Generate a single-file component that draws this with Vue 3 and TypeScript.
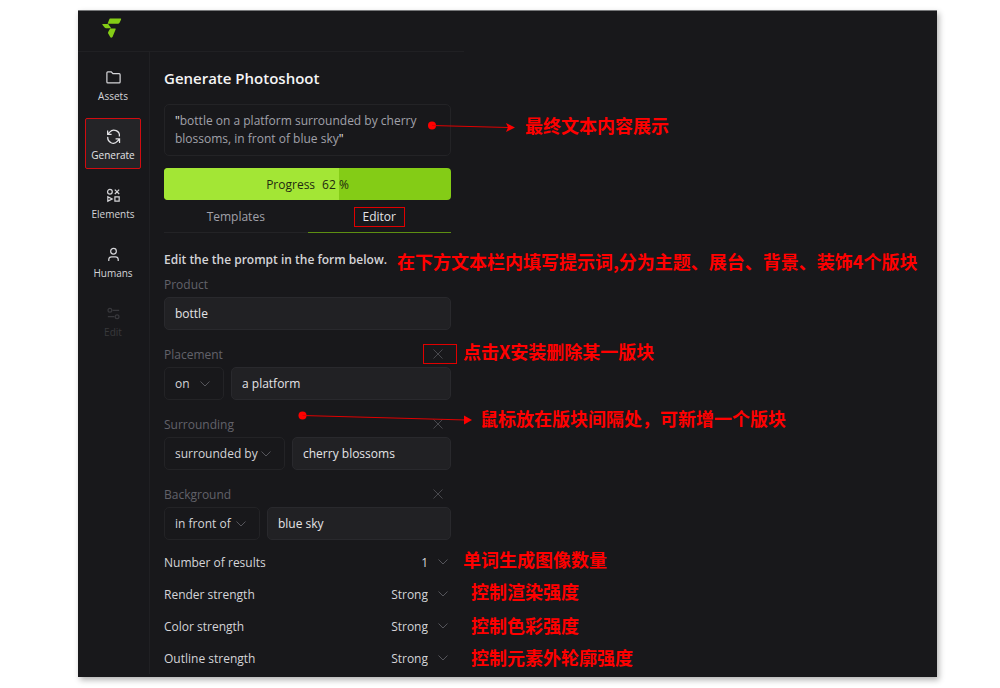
<script setup lang="ts">
import { reactive, ref } from 'vue'

interface NavItem {
  id: string
  label: string
  disabled?: boolean
}

interface Section {
  id: string
  label: string
  size: string
  options: string[]
  link: string
  value: string
}

interface Setting {
  id: string
  label: string
  options: string[]
  value: string
}

const nav: NavItem[] = [
  { id: 'assets', label: 'Assets' },
  { id: 'generate', label: 'Generate' },
  { id: 'elements', label: 'Elements' },
  { id: 'humans', label: 'Humans' },
  { id: 'edit', label: 'Edit', disabled: true },
]
const activeNav = ref('generate')
const activeTab = ref('editor')
const fillShare = ref(61)
const product = ref('bottle')

const sections = reactive<Section[]>([
  { id: 'placement', label: 'Placement', size: 'short', options: ['on', 'in', 'next to'], link: 'on', value: 'a platform' },
  { id: 'surrounding', label: 'Surrounding', size: 'long', options: ['surrounded by', 'with'], link: 'surrounded by', value: 'cherry blossoms' },
  { id: 'background', label: 'Background', size: 'medium', options: ['in front of', 'against'], link: 'in front of', value: 'blue sky' },
])

const strengths = ['Weak', 'Medium', 'Strong']
const settings = reactive<Setting[]>([
  { id: 'results', label: 'Number of results', options: ['1', '2', '4'], value: '1' },
  { id: 'render', label: 'Render strength', options: strengths, value: 'Strong' },
  { id: 'color', label: 'Color strength', options: strengths, value: 'Strong' },
  { id: 'outline', label: 'Outline strength', options: strengths, value: 'Strong' },
])

const notes = [
  { id: 'final', text: '最终文本内容展示' },
  { id: 'form', text: '在下方文本栏内填写提示词,分为主题、展台、背景、装饰4个版块' },
  { id: 'delete', text: '点击X安装删除某一版块' },
  { id: 'insert', text: '鼠标放在版块间隔处，可新增一个版块' },
  { id: 'count', text: '单词生成图像数量' },
  { id: 'render', text: '控制渲染强度' },
  { id: 'color', text: '控制色彩强度' },
  { id: 'outline', text: '控制元素外轮廓强度' },
]
</script>

<template>
  <div class="frame">
    <header class="topbar">
      <svg class="logo" viewBox="0 0 20 20" role="img" aria-label="Logo">
        <path d="M8.2 0.6H18.6Q19.6 0.6 19 1.8L17.4 5Q17 5.8 16 5.8H5.6L7.2 1.4Q7.5 0.6 8.2 0.6Z" />
        <path d="M0.8 6H6.2L9.2 10.2H4Q3.2 10.2 2.6 9.4L0.4 6.8Q0 6 0.8 6Z" />
        <path d="M8.2 10.6H13.4Q14 10.6 13.6 11.6L10.6 18.8Q9.2 20.4 8.2 19L6.2 15.4Q5.9 14.8 6.2 14Z" />
      </svg>
    </header>

    <div class="body">
      <nav class="sidebar">
        <button
          v-for="item in nav"
          :key="item.id"
          type="button"
          class="nav-item"
          :class="{ active: item.id === activeNav }"
          :disabled="item.disabled"
          @click="activeNav = item.id"
        >
          <svg class="nav-icon" viewBox="0 0 18 18" aria-hidden="true">
            <path v-if="item.id === 'assets'" d="M2 13.8V4Q2 3 3 3H6.6L8.4 5H15Q16 5 16 6V13.8Q16 14.8 15 14.8H3Q2 14.8 2 13.8Z" />
            <template v-else-if="item.id === 'generate'">
              <path d="M2.8 2.6V6.8H7M3.2 6.4L5 4.4A5.8 5.8 0 0 1 15.2 9" />
              <path d="M15.4 15.8V11.6H11.2M15 12L13.2 14A5.8 5.8 0 0 1 3 9.4" />
            </template>
            <template v-else-if="item.id === 'elements'">
              <circle cx="5.2" cy="5.1" r="2.5" />
              <path d="M10.4 2.8L15 7.4M15 2.8L10.4 7.4M3 10.3V15L7.6 12.7ZM10.5 10.4H15V15H10.5Z" />
            </template>
            <template v-else-if="item.id === 'humans'">
              <circle cx="9" cy="5.6" r="3" />
              <path d="M4 15.8V14.3Q4 11.4 7 11.4H11Q14 11.4 14 14.3V15.8" />
            </template>
            <template v-else>
              <circle cx="5.2" cy="5.6" r="2" />
              <circle cx="12.8" cy="12.4" r="2" />
              <path d="M8 5.6H15M3 12.4H10" />
            </template>
          </svg>
          <span>{{ item.label }}</span>
        </button>
      </nav>

      <main class="editor">
        <h1 class="title">Generate Photoshoot</h1>
        <p class="prompt"><b>"</b>bottle on a platform surrounded by cherry blossoms, in front of blue sky<b>"</b></p>

        <div class="progress" role="progressbar" aria-valuenow="62" aria-valuemin="0" aria-valuemax="100">
          <div class="progress-fill" :style="{ width: fillShare + '%' }"></div>
          <span class="progress-text"><span>Progress</span><span>62 <i>%</i></span></span>
        </div>

        <div class="tabs" role="tablist">
          <button type="button" role="tab" class="tab" :aria-selected="activeTab === 'templates'" @click="activeTab = 'templates'">
            <span>Templates</span>
          </button>
          <button type="button" role="tab" class="tab" :aria-selected="activeTab === 'editor'" @click="activeTab = 'editor'">
            <span>Editor</span>
          </button>
        </div>

        <h2 class="hint">Edit the the prompt in the form below.</h2>

        <form @submit.prevent>
          <div class="section">
            <div class="section-head"><label for="product">Product</label></div>
            <div class="section-row"><input id="product" v-model="product" class="field" type="text" /></div>
          </div>

          <div v-for="s in sections" :key="s.id" class="section">
            <div class="section-head">
              <label :for="s.id">{{ s.label }}</label>
              <button type="button" class="remove" :class="{ marked: s.id === 'placement' }" :aria-label="'Remove ' + s.label">
                <svg viewBox="0 0 10 10" aria-hidden="true"><path d="M0.5 0.5L9.5 9.5M9.5 0.5L0.5 9.5" /></svg>
              </button>
            </div>
            <div class="section-row">
              <div class="picker" :class="s.size">
                <select v-model="s.link" :aria-label="s.label + ' relation'">
                  <option v-for="o in s.options" :key="o">{{ o }}</option>
                </select>
                <svg class="chevron" viewBox="0 0 10 6" aria-hidden="true"><path d="M0.5 0.5L5 5L9.5 0.5" /></svg>
              </div>
              <input :id="s.id" v-model="s.value" class="field" type="text" />
            </div>
          </div>

          <div class="settings">
            <div v-for="s in settings" :key="s.id" class="setting">
              <label :for="'set-' + s.id">{{ s.label }}</label>
              <div class="setting-picker">
                <select :id="'set-' + s.id" v-model="s.value">
                  <option v-for="o in s.options" :key="o">{{ o }}</option>
                </select>
                <svg class="chevron" viewBox="0 0 10 6" aria-hidden="true"><path d="M0.5 0.5L5 5L9.5 0.5" /></svg>
              </div>
            </div>
          </div>
        </form>
      </main>
    </div>

    <div class="notes" lang="zh-CN">
      <svg class="arrows" viewBox="0 0 500 450" aria-hidden="true">
        <circle cx="354" cy="114.5" r="4" />
        <path class="line" d="M354 114.5L430 116.5" />
        <path d="M437 116.5L428 112L430 116.5L428 121Z" />
        <circle cx="224.5" cy="404.5" r="4" />
        <path class="line" d="M224.5 404.5L388 409" />
        <path d="M394 409L386 404.5V413.5Z" />
      </svg>
      <span v-for="n in notes" :key="n.id" class="note" :class="'note-' + n.id">{{ n.text }}</span>
    </div>
  </div>
</template>

<style>
body {
  margin: 0;
  background: #fff;
}
</style>

<style scoped>
* {
  box-sizing: border-box;
}
.frame {
  position: relative;
  margin: 10px 63px 10px 78px;
  padding-bottom: 3px;
  border-top: 1px solid #77787a;
  background: #18181b;
  box-shadow: 2px 3px 6px rgba(0, 0, 0, 0.3);
  color: #d4d4d8;
  font-family: "Open Sans", "Noto Sans CJK SC", sans-serif;
  font-size: 12px;
}
button, input, select {
  margin: 0;
  padding: 0;
  border: 0;
  background: none;
  color: inherit;
  font: inherit;
}
svg {
  display: block;
}
.topbar {
  width: 386px;
  height: 41px;
  padding: 7px 24px;
  border-bottom: 1px solid #202023;
}
.logo {
  width: 20px;
  height: 20px;
  fill: #84cc16;
}
.body {
  display: flex;
}
.sidebar {
  display: flex;
  flex-direction: column;
  gap: 8px;
  width: 72px;
  padding: 7px 8px 0 7px;
  border-right: 1px solid #202023;
}
.nav-item {
  display: flex;
  flex-direction: column;
  align-items: center;
  gap: 2px;
  height: 51px;
  padding-top: 10px;
  border-radius: 4px;
  font-size: 10px;
  line-height: 16px;
}
.nav-item.active {
  padding-top: 9px;
  border: 1px solid #d20c10;
  border-radius: 2px;
  background: #242427;
  color: #e4e4e7;
}
.nav-item:disabled {
  color: #38383c;
}
.nav-icon {
  width: 17px;
  height: 17px;
  fill: none;
  stroke: currentColor;
  stroke-width: 1.3;
}
.editor {
  width: 301px;
  padding: 15px 0 0 14px;
}
.title {
  margin: 0 0 15px;
  color: #f4f4f5;
  font-size: 15px;
  font-weight: 600;
  line-height: 22px;
}
.prompt {
  margin: 0 0 12px;
  padding: 7px 10px;
  border: 1px solid #232326;
  border-radius: 5px;
  color: #a1a1aa;
  font-weight: 500;
  line-height: 18px;
}
.prompt b {
  color: #e4e4e7;
  font-weight: 500;
}
.progress {
  display: grid;
  height: 32px;
  overflow: hidden;
  border-radius: 4px;
  background: #84cc16;
}
.progress-fill,
.progress-text {
  grid-area: 1 / 1;
}
.progress-fill {
  background: #a3e635;
}
.progress-text {
  z-index: 1;
  display: flex;
  align-items: center;
  justify-content: center;
  gap: 7px;
  color: #1f2a10;
  font-weight: 500;
}
.progress-text i {
  font-style: normal;
  font-weight: 400;
}
.tabs {
  display: grid;
  grid-template-columns: 1fr 1fr;
  height: 33px;
}
.tab {
  padding-top: 2px;
  border-bottom: 1px solid #232326;
  color: #a1a1aa;
  font-weight: 500;
  line-height: 18px;
}
.tab[aria-selected="true"] {
  border-bottom: 1px solid #5d8f12;
  color: #e4e4e7;
}
.tab span {
  display: inline-block;
  padding: 0 8px;
  border: 1px solid transparent;
}
.tab[aria-selected="true"] span {
  border-color: #e00000;
}
.hint {
  margin: 17px 0 4px;
  font-size: 12px;
  font-weight: 600;
  line-height: 20px;
}
.section {
  margin-bottom: 14px;
}
.section-head {
  display: flex;
  align-items: center;
  justify-content: space-between;
  height: 20px;
  margin: 0 -6px 3px 0;
  color: #62626a;
}
.section-row {
  display: flex;
  gap: 7px;
}
.field {
  flex: 1;
  min-width: 0;
  height: 33px;
  padding: 0 10px;
  border: 1px solid #29292d;
  border-radius: 5px;
  background: #212124;
  color: #e4e4e7;
}
.remove {
  display: grid;
  place-items: center;
  width: 34px;
  height: 20px;
  padding-right: 5px;
  border: 1px solid transparent;
}
.remove.marked {
  border-color: #e00000;
}
.remove svg {
  width: 10px;
  height: 10px;
  fill: none;
  stroke: #48484d;
}
.picker,
.setting-picker {
  display: grid;
  align-items: center;
}
.picker > *,
.setting-picker > * {
  grid-area: 1 / 1;
}
.picker {
  height: 33px;
  border: 1px solid #232326;
  border-radius: 5px;
}
.short {
  width: 60px;
}
.medium {
  width: 96px;
}
.long {
  width: 121px;
}
select {
  width: 100%;
  height: 100%;
  appearance: none;
}
.picker select {
  padding-left: 10px;
}
.chevron {
  justify-self: end;
  width: 10px;
  height: 6px;
  margin-right: 13px;
  fill: none;
  stroke: #55555b;
  pointer-events: none;
}
.settings {
  margin-top: -8px;
}
.setting {
  display: flex;
  align-items: center;
  justify-content: space-between;
  height: 32px;
}
.setting-picker {
  width: 80px;
  height: 24px;
}
.setting-picker select {
  padding-right: 23px;
  text-align-last: right;
}
.setting-picker .chevron {
  margin-right: 3px;
}
.notes {
  position: absolute;
  inset: 0;
  pointer-events: none;
}
.arrows {
  position: absolute;
  top: 0;
  left: 0;
  width: 500px;
  height: 450px;
  fill: #f00;
}
.arrows .line {
  stroke: #e00000;
  stroke-width: 1.2;
}
.note {
  position: absolute;
  color: #f00;
  font-family: "Noto Sans CJK SC", sans-serif;
  font-size: 18px;
  font-weight: 700;
  line-height: 24px;
  white-space: nowrap;
}
.note-final {
  top: 102px;
  left: 447px;
}
.note-form {
  top: 238px;
  left: 319px;
}
.note-delete {
  top: 328px;
  left: 385px;
}
.note-insert {
  top: 395px;
  left: 402px;
}
.note-count {
  top: 536px;
  left: 385px;
}
.note-render {
  top: 568px;
  left: 393px;
}
.note-color {
  top: 602px;
  left: 393px;
}
.note-outline {
  top: 634px;
  left: 393px;
}
</style>
